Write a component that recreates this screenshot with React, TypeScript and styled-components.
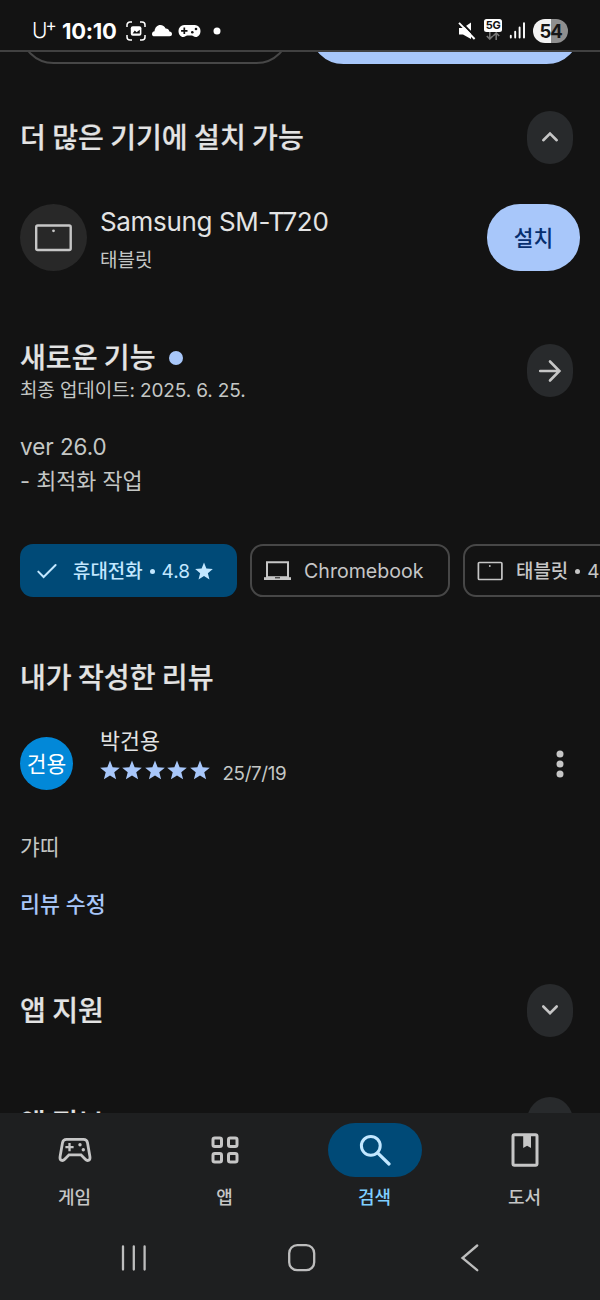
import React from "react";
import styled, { createGlobalStyle } from "styled-components";

const GlobalStyle = createGlobalStyle`
  * { box-sizing: border-box; }
  body {
    margin: 0;
    background: #131313;
    font-family: "Inter", "Noto Sans CJK KR", sans-serif;
  }
  svg { display: block; flex: none; }
`;

const color = {
  text: "#e3e3e3",
  muted: "#c4c7c5",
  soft: "#c6c6c6",
  accent: "#a8c7fa",
  outline: "#474747",
  surface: "#1e1f20",
  tonal: "#282a2c",
  selected: "#004a77",
};

const Screen = styled.div`
  width: 600px;
  height: 1300px;
  display: flex;
  flex-direction: column;
  overflow: hidden;
  background: #131313;
  color: ${color.text};
`;

const StatusBar = styled.header`
  flex: none;
  height: 52px;
  display: flex;
  justify-content: space-between;
  padding: 9px 32px 0 32px;
  border-bottom: 2px solid #414141;
  color: #fff;
`;

const StatusGroup = styled.div`
  display: flex;
  align-items: center;
  height: 43px;
`;

const Carrier = styled.span`
  display: flex;
  width: 23px;
  font-size: 21px;
  font-weight: 300;
  line-height: 24px;
`;

const CarrierPlus = styled.span`
  margin: -6px 0 0 -2px;
  font-size: 17px;
  font-weight: 400;
`;

const Clock = styled.time`
  width: 56px;
  margin: 0 8px 0 7px;
  font-size: 22px;
  font-weight: 700;
  letter-spacing: -0.3px;
  white-space: nowrap;
`;

const Battery = styled.span`
  width: 35px;
  height: 24px;
  margin-left: 7px;
  border-radius: 12px;
  background: linear-gradient(90deg, #f2f2f2 0 52%, #8f8f8f 52%);
  color: #161616;
  font-size: 18.5px;
  font-weight: 700;
  letter-spacing: -1.2px;
  line-height: 24px;
  text-align: center;
`;

const Content = styled.main`
  flex: 1;
  min-height: 0;
  overflow: hidden;
  display: flex;
  flex-direction: column;
  padding-left: 20px;
`;

const Actions = styled.div`
  flex: none;
  display: flex;
  gap: 20px;
  margin-top: -55px;
`;

const ActionPill = styled.div<{ $filled?: boolean }>`
  width: 270px;
  height: 67px;
  border-radius: 33.5px;
  border: 2px solid ${(p) => (p.$filled ? color.accent : color.outline)};
  background: ${(p) => (p.$filled ? color.accent : "transparent")};
`;

const SectionHeader = styled.div<{ $top: number }>`
  flex: none;
  display: flex;
  align-items: center;
  justify-content: space-between;
  height: 53px;
  margin-top: ${(p) => p.$top}px;
  padding-right: 27px;
`;

const Title = styled.h2`
  margin: 0;
  padding-bottom: 3px;
  font-family: "Noto Sans CJK KR", sans-serif;
  font-size: 28.1px;
  font-weight: 500;
  line-height: 36px;
  white-space: nowrap;
  -webkit-text-stroke: 0.2px currentColor;
`;

const TitleRow = styled.div`
  display: flex;
  align-items: center;
  gap: 13px;
`;

const NewDot = styled.i`
  width: 14px;
  height: 14px;
  border-radius: 50%;
  background: ${color.accent};
`;

const RoundButton = styled.button`
  display: flex;
  align-items: center;
  justify-content: center;
  width: 46px;
  height: 53px;
  padding: 0;
  border: 0;
  border-radius: 23px / 24px;
  background: ${color.tonal};
  color: ${color.soft};
`;

const DeviceRow = styled.div`
  flex: none;
  display: flex;
  align-items: center;
  height: 67px;
  margin-top: 40px;
  padding-right: 20px;
`;

const DeviceIcon = styled.div`
  display: flex;
  align-items: center;
  justify-content: center;
  width: 67px;
  height: 67px;
  margin-right: 13px;
  border-radius: 50%;
  background: #282828;
  color: ${color.soft};
`;

const DeviceText = styled.div`
  flex: 1;
  display: flex;
  flex-direction: column;
  padding-top: 4px;
`;

const DeviceName = styled.span`
  font-size: 26px;
  letter-spacing: -0.35px;
  line-height: 36px;
  white-space: nowrap;
`;

const DeviceKind = styled.span`
  margin-top: 7px;
  font-size: 19px;
  line-height: 28px;
  color: ${color.muted};
`;

const InstallButton = styled.button`
  width: 93px;
  height: 67px;
  padding: 0 0 2px;
  border: 0;
  border-radius: 33px;
  background: ${color.accent};
  color: #062e6f;
  font: 500 21.4px "Noto Sans CJK KR", sans-serif;
`;

const Updated = styled.p`
  margin: 0;
  font-size: 19px;
  letter-spacing: -0.12px;
  line-height: 28px;
  color: ${color.muted};
  white-space: nowrap;
`;

const Notes = styled.p`
  flex: none;
  margin: 33px 0 0;
  font-size: 21.8px;
  line-height: 34px;
  color: ${color.muted};
`;

const Version = styled.span`
  font-size: 22.4px;
`;

const HeadingStack = styled.div`
  display: flex;
  flex-direction: column;
  padding-top: 2px;
`;

const Chips = styled.div`
  flex: none;
  display: flex;
  gap: 13px;
  margin-top: 46px;
`;

const Chip = styled.div<{ $width: number; $selected?: boolean }>`
  flex: none;
  display: flex;
  align-items: center;
  width: ${(p) => p.$width}px;
  height: 53px;
  padding-left: ${(p) => (p.$selected ? 16 : 12)}px;
  border: ${(p) => (p.$selected ? "0" : `2px solid ${color.outline}`)};
  border-radius: 13px;
  background: ${(p) => (p.$selected ? color.selected : "transparent")};
  color: ${(p) => (p.$selected ? "#c2e7ff" : color.soft)};
  font-size: 18.9px;
  font-weight: 500;
  white-space: nowrap;
`;

const ChipLabel = styled.span<{ $gap: number }>`
  margin: -2px 5px 0 ${(p) => p.$gap}px;
`;

const ChipName = styled.span`
  margin: 0 0 0 13px;
  font-size: 19.6px;
  font-weight: 400;
  line-height: 28px;
`;

const Bullet = styled.i`
  display: inline-block;
  width: 5px;
  height: 5px;
  margin: 0 7px 4px 7px;
  border-radius: 50%;
  background: currentColor;
`;

const Score = styled.span`
  font-size: 19px;
  font-weight: 400;
`;

const ReviewTitle = styled(Title)`
  flex: none;
  margin-top: 61px;
`;

const Reviewer = styled.div`
  flex: none;
  display: flex;
  align-items: center;
  height: 70px;
  margin-top: 31px;
  padding-right: 36px;
`;

const Avatar = styled.div`
  flex: none;
  width: 53px;
  height: 53px;
  margin-right: 27px;
  border-radius: 50%;
  background: #0288d8;
  color: #fff;
  font-size: 21.5px;
  line-height: 54px;
  text-align: center;
`;

const ReviewerInfo = styled.div`
  flex: 1;
  display: flex;
  flex-direction: column;
  height: 70px;
`;

const ReviewerName = styled.span`
  margin-top: -1px;
  font-size: 21.7px;
  line-height: 28px;
`;

const Rating = styled.div`
  display: flex;
  align-items: center;
  gap: 2.6px;
  height: 30px;
  margin-left: -0.5px;
  color: ${color.accent};
`;

const ReviewDate = styled.span`
  margin: 8px 0 0 10px;
  font-size: 18.8px;
  letter-spacing: -0.35px;
  line-height: 28px;
  color: ${color.muted};
`;

const ReviewBody = styled.p`
  flex: none;
  margin: 31px 0 0;
  font-size: 21.4px;
  line-height: 36px;
  color: ${color.muted};
`;

const EditLink = styled.a`
  flex: none;
  margin-top: 21px;
  font-size: 21.7px;
  font-weight: 500;
  line-height: 36px;
  color: ${color.accent};
`;

const BottomArea = styled.footer`
  flex: none;
  height: 187px;
  background: ${color.surface};
`;

const Tabs = styled.nav`
  display: grid;
  grid-template-columns: repeat(4, 150px);
  padding-top: 10px;
`;

const Tab = styled.div<{ $active?: boolean }>`
  display: flex;
  flex-direction: column;
  align-items: center;
  color: ${(p) => (p.$active ? "#7fcfff" : color.soft)};
  font-size: 18px;
  font-weight: 500;
`;

const TabIcon = styled.div<{ $active?: boolean }>`
  display: flex;
  align-items: center;
  justify-content: center;
  width: 94px;
  height: 54px;
  border-radius: 27px;
  background: ${(p) => (p.$active ? color.selected : "transparent")};
  color: ${(p) => (p.$active ? "#c2e7ff" : color.soft)};
`;

const TabLabel = styled.span`
  margin-top: 7px;
  padding-right: 1px;
  line-height: 28px;
`;

const SystemBar = styled.div`
  display: grid;
  grid-template-columns: 28px 28px 20px;
  align-items: center;
  gap: 140px;
  height: 30px;
  margin-top: 31px;
  padding-left: 120px;
  color: #bdbdbd;
`;

const STAR = "M12 1.6l2.9 7.4 7.9.5-6.1 5.1 2 7.7L12 18l-6.7 4.3 2-7.7L1.2 9.5l7.9-.5z";

const Star = ({ size }: { size: number }) => (
  <svg width={size} height={size} viewBox="1 1 22 22" fill="currentColor">
    <path d={STAR} />
  </svg>
);

const Chevron = ({ up }: { up?: boolean }) => (
  <svg width="18" height="13" viewBox="0 0 18 13" fill="none" stroke="currentColor" strokeWidth="2.6" strokeLinecap="round">
    <path d={up ? "M2.3 9.2 9 2.6l6.7 6.6" : "M2.3 2.5 9 9.1l6.7-6.6"} />
  </svg>
);

const ArrowRight = () => (
  <svg width="24" height="24" viewBox="0 0 24 24" fill="none" stroke="currentColor" strokeWidth="2.6" strokeLinecap="round">
    <path d="M2.2 12h19M12 2.5l9.4 9.5-9.4 9.5" />
  </svg>
);

const TabletLarge = () => (
  <svg width="38" height="28" viewBox="0 0 38 28">
    <rect x="1.2" y="1.5" width="34.5" height="24.5" rx="1.5" fill="none" stroke="currentColor" strokeWidth="2.4" />
    <circle cx="18.5" cy="6.8" r="1.4" fill="currentColor" />
  </svg>
);

const TabletSmall = () => (
  <svg width="26" height="20" viewBox="0 0 26 20">
    <rect x="1.4" y="1.5" width="23.5" height="17" rx="1" fill="none" stroke="currentColor" strokeWidth="1.7" />
    <circle cx="12.8" cy="5" r="0.9" fill="currentColor" />
  </svg>
);

const Laptop = () => (
  <svg width="27" height="20" viewBox="0 0 27 20">
    <path d="M3 17V1.2h21V17" fill="none" stroke="currentColor" strokeWidth="2" />
    <path d="M0 16.2h27V19H0z" fill="currentColor" />
    <path d="M3 15.2h21v2H3z" fill="currentColor" />
    <path d="M11 16.3h5v1h-5z" fill="#131313" />
  </svg>
);

const Check = () => (
  <svg width="22" height="18" viewBox="0 0 22 18" fill="none" stroke="currentColor" strokeWidth="2" strokeLinecap="round">
    <path d="M2.3 9.6 7.6 15 19.6 3" />
  </svg>
);

const MoreDots = () => (
  <svg width="8" height="30" viewBox="0 0 8 30" fill={color.soft}>
    <circle cx="4" cy="6" r="3.5" />
    <circle cx="4" cy="16" r="3.5" />
    <circle cx="4" cy="26" r="3.5" />
  </svg>
);

const CaptureIcon = () => (
  <svg width="20" height="20" viewBox="0 0 20 20">
    <path
      d="M1 6V4a3 3 0 0 1 3-3h2M14 1h2a3 3 0 0 1 3 3v2M19 14v2a3 3 0 0 1-3 3h-2M6 19H4a3 3 0 0 1-3-3v-2"
      fill="none"
      stroke="#fff"
      strokeWidth="1.5"
    />
    <rect x="4.8" y="5.2" width="10.6" height="9.6" rx="2" fill="#fff" />
    <path d="M6.6 12.6l2.2-3 1.8 1.7 3.2-2.6v3.9z" fill="#131313" />
  </svg>
);

const CloudIcon = () => (
  <svg width="20" height="13" viewBox="0 0 20 13" fill="#fff">
    <path d="M2.6 12.3C.8 12.3 0 11.2 0 9.9c0-1.500 1.100-2.500 2.500-2.700C2.900 3.500 5.300 1 8.300 1c2.400 0 4.400 1.400 5.300 3.600 2-.1 3.400 1.100 3.800 2.900 1.600.1 2.600 1.100 2.600 2.500 0 1.300-1 2.300-2.400 2.300z" />
  </svg>
);

const PadIcon = () => (
  <svg width="23" height="14" viewBox="0 0 23 14">
    <path
      d="M6.5 1h10A5.700 5.700 0 0 1 22.500 7c0 3.600-2.200 6-4.700 6-2.100 0-2.600-1.400-4.200-1.400H9.400C7.800 11.600 7.300 13 5.200 13 2.700 13 .5 10.600.5 7a5.700 5.700 0 0 1 6-6z"
      fill="#fff"
    />
    <path d="M6.3 3.6v6.4M3.1 6.8h6.4" stroke="#131313" strokeWidth="1.7" />
    <circle cx="14.3" cy="8.3" r="1.3" fill="#131313" />
    <circle cx="18" cy="5" r="1.3" fill="#131313" />
  </svg>
);

const StatusDot = () => (
  <svg width="8" height="8" viewBox="0 0 8 8" fill="#fff">
    <circle cx="4" cy="4" r="3.5" />
  </svg>
);

const MuteIcon = () => (
  <svg width="18" height="18" viewBox="0 0 18 18">
    <path d="M1 6h4l8-5.500v16.500L5 12.500H1z" fill="#fff" />
    <path d="M2.500-.5 19 16.500" stroke="#131313" strokeWidth="2" />
    <path d="M1 .8l15.600 16.200" stroke="#fff" strokeWidth="1.9" />
  </svg>
);

const FiveGBadge = styled.span`
  width: 18px;
  height: 13px;
  border-radius: 2.5px;
  background: #fff;
  color: #131313;
  font-size: 11px;
  font-weight: 700;
  letter-spacing: -0.3px;
  line-height: 13.5px;
  text-align: center;
`;

const Network = styled.span`
  display: flex;
  flex-direction: column;
  align-items: center;
  margin: -2px 7px 0 8px;
`;

const DataArrows = () => (
  <svg width="14" height="8" viewBox="0 0 14 8" fill="none" stroke="#777" strokeWidth="1.6">
    <path d="M3.8 0v7M.8 4l3 3 3-3M10.2 8V1M7.2 4l3-3 3 3" />
  </svg>
);

const SignalIcon = () => (
  <svg width="17" height="17" viewBox="0 0 17 17" stroke="#fff" strokeWidth="1.9" strokeLinecap="round">
    <path d="M1.8 13.8v1.700M6.200 9.800v5.700M10.600 5.500v10M15 1.300v14.200" />
  </svg>
);

const GamepadIcon = () => (
  <svg width="34" height="26" viewBox="0 0 34 26">
    <path
      d="M8.500 2.400h17c2.300 0 3.600 1.200 4 3.400l2.400 13.600c.7 4-2.300 5.200-4.600 2.800L23 17.800H11l-4.300 4.400c-2.300 2.400-5.300 1.200-4.600-2.800L4.500 5.800c.4-2.200 1.700-3.400 4-3.400z"
      fill="none"
      stroke="currentColor"
      strokeWidth="2.8"
    />
    <path d="M11.5 6v8.200M7.400 10.100h8.200" stroke="currentColor" strokeWidth="2.3" />
    <circle cx="22" cy="7.8" r="1.7" fill="currentColor" />
    <circle cx="25.3" cy="12.7" r="1.7" fill="currentColor" />
  </svg>
);

const AppsIcon = () => (
  <svg width="28" height="28" viewBox="0 0 28 28" fill="none" stroke="currentColor" strokeWidth="3">
    <rect x="2" y="2" width="8.5" height="8.5" rx="1.8" />
    <rect x="17.5" y="2" width="8.5" height="8.5" rx="1.8" />
    <rect x="2" y="17.5" width="8.5" height="8.5" rx="1.8" />
    <rect x="17.5" y="17.5" width="8.5" height="8.5" rx="1.8" />
  </svg>
);

const SearchIcon = () => (
  <svg width="32" height="32" viewBox="0 0 32 32" fill="none" stroke="currentColor" strokeWidth="3" strokeLinecap="round">
    <circle cx="11.8" cy="11.8" r="9.4" />
    <path d="M18.6 18.8 30 30" strokeWidth="3.2" />
  </svg>
);

const BookIcon = () => (
  <svg width="28" height="34" viewBox="0 0 28 34">
    <rect x="2" y="1.8" width="24" height="30.4" rx="1.5" fill="none" stroke="currentColor" strokeWidth="3" />
    <path d="M12.2 2h7.800v13l-3.900-2.300-3.900 2.300z" fill="currentColor" />
  </svg>
);

const RecentsIcon = () => (
  <svg width="28" height="28" viewBox="0 0 28 28" stroke="currentColor" strokeWidth="2.3" strokeLinecap="round">
    <path d="M3 2.500v23M13.800 2.500v23M24.600 2.500v23" />
  </svg>
);

const HomeIcon = () => (
  <svg width="28" height="28" viewBox="0 0 28 28" fill="none" stroke="currentColor" strokeWidth="2.3">
    <rect x="1.2" y="1.2" width="25" height="25" rx="8" />
  </svg>
);

const BackIcon = () => (
  <svg width="24" height="28" viewBox="0 0 24 28" fill="none" stroke="currentColor" strokeWidth="2.3" strokeLinecap="round">
    <path d="M21.200 1.500 6.500 14l14.700 12.200" />
  </svg>
);

const StatusIcons = styled.div`
  display: flex;
  align-items: center;
  gap: 6px;
`;

const DotSlot = styled.span`
  margin-left: 6px;
`;

const tabs = [
  { label: "게임", icon: <GamepadIcon /> },
  { label: "앱", icon: <AppsIcon /> },
  { label: "검색", icon: <SearchIcon />, active: true },
  { label: "도서", icon: <BookIcon /> },
];

export default function App() {
  return (
    <>
      <GlobalStyle />
      <Screen>
        <StatusBar>
          <StatusGroup>
            <Carrier>
              U<CarrierPlus>+</CarrierPlus>
            </Carrier>
            <Clock>10:10</Clock>
            <StatusIcons>
              <CaptureIcon />
              <CloudIcon />
              <PadIcon />
              <DotSlot>
                <StatusDot />
              </DotSlot>
            </StatusIcons>
          </StatusGroup>
          <StatusGroup>
            <MuteIcon />
            <Network>
              <FiveGBadge>5G</FiveGBadge>
              <DataArrows />
            </Network>
            <SignalIcon />
            <Battery>54</Battery>
          </StatusGroup>
        </StatusBar>

        <Content>
          <Actions>
            <ActionPill />
            <ActionPill $filled />
          </Actions>

          <SectionHeader $top={47}>
            <Title>더 많은 기기에 설치 가능</Title>
            <RoundButton>
              <Chevron up />
            </RoundButton>
          </SectionHeader>

          <DeviceRow>
            <DeviceIcon>
              <TabletLarge />
            </DeviceIcon>
            <DeviceText>
              <DeviceName>Samsung SM-T720</DeviceName>
              <DeviceKind>태블릿</DeviceKind>
            </DeviceText>
            <InstallButton>설치</InstallButton>
          </DeviceRow>

          <SectionHeader $top={73}>
            <HeadingStack>
              <TitleRow>
                <Title>새로운 기능</Title>
                <NewDot />
              </TitleRow>
              <Updated>최종 업데이트: 2025. 6. 25.</Updated>
            </HeadingStack>
            <RoundButton>
              <ArrowRight />
            </RoundButton>
          </SectionHeader>

          <Notes>
            <Version>ver 26.0</Version>
            <br />- 최적화 작업
          </Notes>

          <Chips>
            <Chip $width={217} $selected>
              <Check />
              <ChipLabel $gap={15}>
                휴대전화
                <Bullet />
                <Score>4.8</Score>
              </ChipLabel>
              <Star size={18} />
            </Chip>
            <Chip $width={200}>
              <Laptop />
              <ChipName>Chromebook</ChipName>
            </Chip>
            <Chip $width={210}>
              <TabletSmall />
              <ChipLabel $gap={13}>
                태블릿
                <Bullet />
                <Score>4.8</Score>
              </ChipLabel>
              <Star size={18} />
            </Chip>
          </Chips>

          <ReviewTitle>내가 작성한 리뷰</ReviewTitle>
          <Reviewer>
            <Avatar>건용</Avatar>
            <ReviewerInfo>
              <ReviewerName>박건용</ReviewerName>
              <Rating>
                {[0, 1, 2, 3, 4].map((i) => (
                  <Star key={i} size={20} />
                ))}
                <ReviewDate>25/7/19</ReviewDate>
              </Rating>
            </ReviewerInfo>
            <MoreDots />
          </Reviewer>
          <ReviewBody>갸띠</ReviewBody>
          <EditLink>리뷰 수정</EditLink>

          <SectionHeader $top={62}>
            <Title>앱 지원</Title>
            <RoundButton>
              <Chevron />
            </RoundButton>
          </SectionHeader>
          <SectionHeader $top={60}>
            <Title>앱 정보</Title>
            <RoundButton>
              <Chevron />
            </RoundButton>
          </SectionHeader>
        </Content>

        <BottomArea>
          <Tabs>
            {tabs.map((t) => (
              <Tab key={t.label} $active={t.active}>
                <TabIcon $active={t.active}>{t.icon}</TabIcon>
                <TabLabel>{t.label}</TabLabel>
              </Tab>
            ))}
          </Tabs>
          <SystemBar>
            <RecentsIcon />
            <HomeIcon />
            <BackIcon />
          </SystemBar>
        </BottomArea>
      </Screen>
    </>
  );
}
